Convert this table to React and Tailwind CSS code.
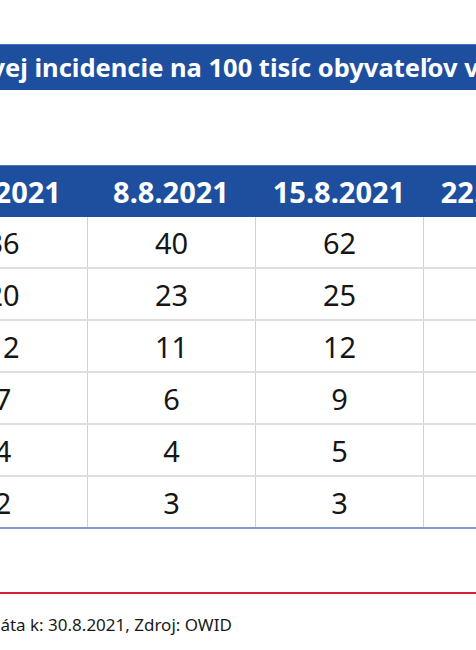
const dates = ['1.8.2021', '8.8.2021', '15.8.2021', '22.8.2021'];

const rows = [
  ['36', '40', '62', ''],
  ['20', '23', '25', ''],
  ['12', '11', '12', ''],
  ['7', '6', '9', ''],
  ['4', '4', '5', ''],
  ['2', '3', '3', ''],
];

function App() {
  return (
    <div className="w-[476px] h-[650px] overflow-hidden bg-white font-['Noto_Sans',sans-serif] font-stretch-semi-condensed">
      <div className="h-[44px]" />

      {/* titulok */}
      <div className="h-[46px] bg-[#1e4f9f] border-t border-[#4a74b8] flex items-center whitespace-nowrap overflow-hidden">
        <span className="-ml-[95px] text-white font-bold text-[25.5px] leading-none">
          14-dňovej incidencie na 100 tisíc obyvateľov v krajinách
        </span>
      </div>

      <div className="h-[75px]" />

      {/* tabuľka */}
      <div className="-ml-[81px] w-[672px]">
        <div className="grid grid-cols-4 h-[52px] bg-[#1e4f9f] border-t border-[#4a74b8]">
          {dates.map((d) => (
            <div key={d} className="flex items-center justify-center text-white font-bold text-[29px] leading-none">
              {d}
            </div>
          ))}
        </div>
        {rows.map((r, i) => (
          <div
            key={i}
            className={
              'grid grid-cols-4 h-[52px] ' +
              (i === rows.length - 1 ? 'border-b-2 border-[#7d9bd0]' : 'border-b-2 border-[#dedede]')
            }
          >
            {r.map((v, j) => (
              <div
                key={j}
                className={
                  'flex items-center justify-center text-[#161616] text-[29px] leading-none ' +
                  (j > 0 ? 'border-l border-[#d2d2d2]' : '')
                }
              >
                {v}
              </div>
            ))}
          </div>
        ))}
      </div>

      <div className="h-[63px]" />
      <div className="h-[2px] bg-[#d41f36]" />

      {/* zdroj */}
      <div className="pt-[19px] whitespace-nowrap">
        <span className="-ml-[12px] inline-block text-[#1a1a1a] text-[17px] leading-none">
          Dáta k: 30.8.2021, Zdroj: OWID
        </span>
      </div>
    </div>
  );
}

export default App;
